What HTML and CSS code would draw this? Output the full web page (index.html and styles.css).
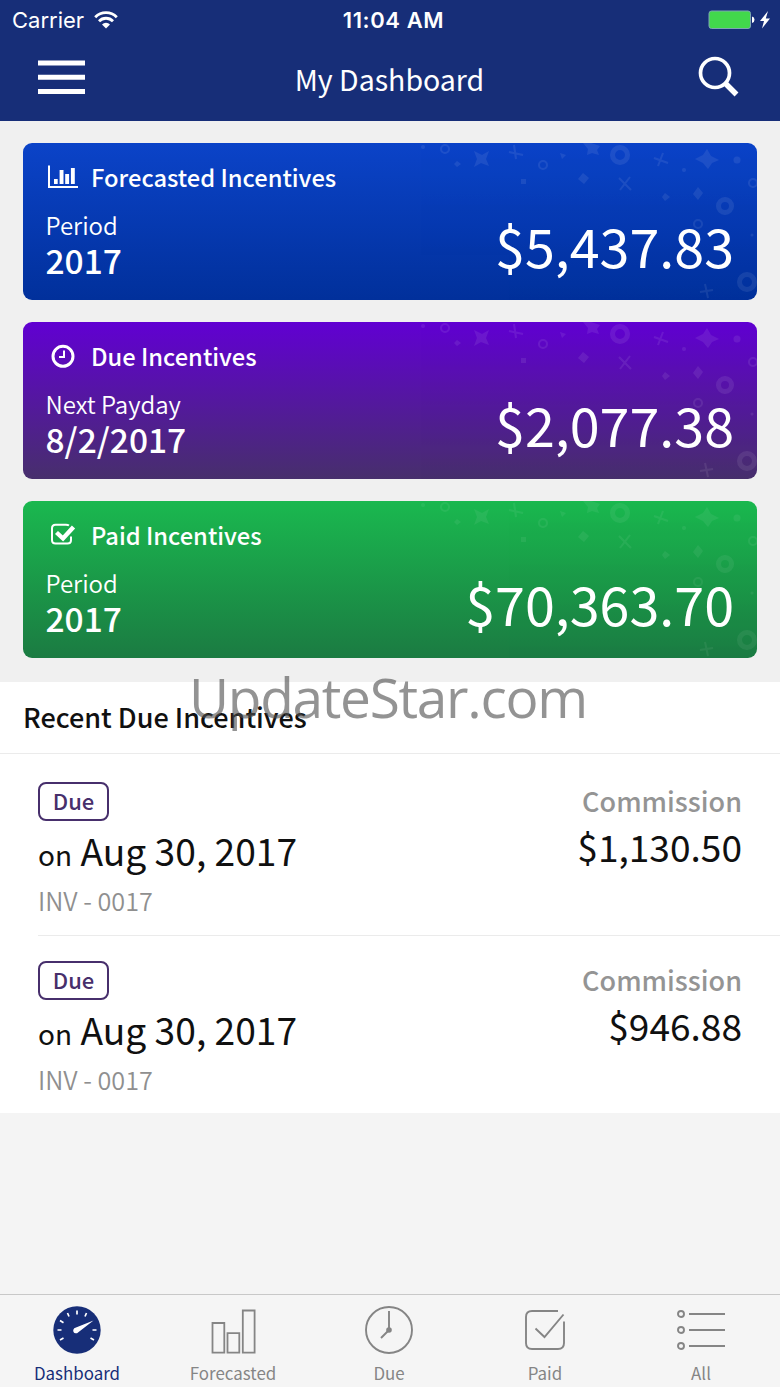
FILE: index.html
```html
<!DOCTYPE html>
<html lang="en">
<head>
<meta charset="utf-8">
<title>My Dashboard</title>
<link rel="stylesheet" href="styles.css">
</head>
<body>
<svg class="defs" width="0" height="0" aria-hidden="true">
  <symbol id="confetti" viewBox="0 0 734 156">
    <g fill="#fff">
      <path d="M451 8l8 4 7-4-3 8 3 7-8-3-7 4 3-8zM560 0h8l9 3-3 4 2 5-7-2-5 2 1-6zM684 6l4 7 8 4-7 3-4 6-5-6-8-4 8-4zM560 30l6 5-5 6-6-5zM675 44l5 6-5 7-5-6z"/>
      <path d="M434 18l4 3-4 3-3-3zM498 36h5v5h-5zM537 10l6 2-4 4zM642 50l5 4-5 4-3-4z"/>
      <circle cx="714" cy="17" r="3.5"/><circle cx="661" cy="27" r="2"/><circle cx="729" cy="92" r="1.5"/><circle cx="400" cy="4" r="2"/>
    </g>
    <g fill="none" stroke="#fff">
      <g stroke-width="2"><circle cx="422" cy="6" r="4"/><circle cx="520" cy="22" r="4"/><circle cx="675" cy="81" r="4"/><circle cx="730" cy="40" r="4"/>
      <path d="M486 9l14 3M491 2l2 14M631 15l14 5M635 23l5-13M596 35l12 12M607 34l-10 13M677 149l13-2M682 141l3 14"/></g>
      <g stroke-width="5"><circle cx="597" cy="12" r="7.500"/><circle cx="702" cy="63" r="6.500"/><circle cx="724" cy="139" r="7.500"/></g>
    </g>
  </symbol>
</svg>
<div class="app">
  <header class="header">
    <div class="status">
      <div class="carrier"><span>Carrier</span>
        <svg width="24" height="18" viewBox="0 0 24 18"><g fill="none" stroke="#fff" stroke-width="2.8"><path d="M1.2 6.2a15.2 15.2 0 0 1 21.6 0"/><path d="M5 10.2a9.800 9.800 0 0 1 14 0"/></g><path d="M12 17.400l-4-4a5.700 5.700 0 0 1 8 0z" fill="#fff"/></svg>
      </div>
      <div class="time">11:04 AM</div>
      <svg class="battery" width="64" height="20" viewBox="0 0 64 20"><rect x="1" y="1" width="41.5" height="17.5" rx="2.5" fill="#42d84c" stroke="#7ea6b3"/><path d="M44 6.500q2.500.5 2.500 3.300t-2.500 3.200z" fill="#fff"/><path d="M60 1l-8 10h4l-2 7.500 8-10h-4.200z" fill="#fff"/></svg>
    </div>
    <div class="navbar">
      <svg class="menu" width="48" height="36" viewBox="0 0 48 36"><path d="M0 3h47M0 17.200h47M0 31.400h47" stroke="#fff" stroke-width="5"/></svg>
      <h1 class="title">My Dashboard</h1>
      <svg class="search" width="44" height="44" viewBox="0 0 44 44"><g fill="none" stroke="#fff"><circle cx="18" cy="18" r="14.500" stroke-width="3.700"/><path d="M28 28l11.500 11.500" stroke-width="5.500"/></g></svg>
    </div>
  </header>

  <main class="cards">
    <section class="card forecast">
      <svg class="pattern"><use href="#confetti"/></svg>
      <div class="card-head">
        <svg width="34" height="30" viewBox="0 0 34 30"><path d="M3 3.500V25h29" fill="none" stroke="#fff" stroke-width="2"/><path d="M8 17h3.700v5H8zM13.600 8h3.900v14h-3.900zM19.200 12h3.900v10h-3.900zM24.900 6h3.900v16h-3.900z" fill="#fff"/></svg>
        <h2>Forecasted Incentives</h2>
      </div>
      <div class="card-body">
        <div><div class="label">Period</div><div class="value">2017</div></div>
        <div class="amount">$5,437.83</div>
      </div>
    </section>
    <section class="card due">
      <svg class="pattern"><use href="#confetti"/></svg>
      <div class="card-head">
        <svg width="34" height="30" viewBox="0 0 34 30"><circle cx="17" cy="15.300" r="10" fill="none" stroke="#fff" stroke-width="3"/><path d="M18 9.500v6.500h-5" fill="none" stroke="#fff" stroke-width="2"/></svg>
        <h2>Due Incentives</h2>
      </div>
      <div class="card-body">
        <div><div class="label">Next Payday</div><div class="value">8/2/2017</div></div>
        <div class="amount">$2,077.38</div>
      </div>
    </section>
    <section class="card paid">
      <svg class="pattern"><use href="#confetti"/></svg>
      <div class="card-head">
        <svg width="34" height="30" viewBox="0 0 34 30"><path d="M23 5.500q-1-.7-3-.7H9.500q-3.500 0-3.500 3.500v11.700q0 3.500 3.500 3.500h12q3.500 0 3.500-3.500V16.500" fill="none" stroke="#fff" stroke-width="2"/><path d="M10.500 12.500l6.500 6L27.500 7" fill="none" stroke="#fff" stroke-width="4.400"/></svg>
        <h2>Paid Incentives</h2>
      </div>
      <div class="card-body">
        <div><div class="label">Period</div><div class="value">2017</div></div>
        <div class="amount">$70,363.70</div>
      </div>
    </section>
  </main>

  <section class="recent">
    <h2 class="recent-title">Recent Due Incentives</h2>
    <article class="item">
      <div><div class="badge">Due</div><div class="date"><span class="on">on</span> Aug 30, 2017</div><div class="inv">INV - 0017</div></div>
      <div class="right"><div class="commission">Commission</div><div class="sum">$1,130.50</div></div>
    </article>
    <article class="item last">
      <div><div class="badge">Due</div><div class="date"><span class="on">on</span> Aug 30, 2017</div><div class="inv">INV - 0017</div></div>
      <div class="right"><div class="commission">Commission</div><div class="sum">$946.88</div></div>
    </article>
  </section>

  <nav class="tabs">
    <div class="tab active">
      <svg width="48" height="48" viewBox="0 0 48 48"><circle cx="24" cy="24" r="23.700" fill="#172e78"/><path d="M24 4.500v4M14.500 7l1.500 3.500M33.500 7L32 10.500M7 14.500l3.500 2.200M4.500 24h4M39.500 24h4M7 34l3.500-2M41 34l-3.500-2" stroke="#fff" stroke-width="1.700"/><path d="M40.500 14.500L25 26.500a2.800 2.800 0 1 1-2.600-4.700z" fill="#fff"/></svg>
      <span>Dashboard</span>
    </div>
    <div class="tab">
      <svg width="48" height="48" viewBox="0 0 48 48"><path d="M3.500 17h11.800v29.700H3.500zM18.500 27.200h11.800v19.500H18.500zM33.800 4.500h11.800v42.200H33.800z" fill="none" stroke="#858585" stroke-width="1.800"/></svg>
      <span>Forecasted</span>
    </div>
    <div class="tab">
      <svg width="48" height="48" viewBox="0 0 48 48"><g fill="none" stroke="#858585" stroke-width="1.900"><circle cx="24" cy="24" r="23"/><path d="M24 5v19l-8 8"/></g><circle cx="24" cy="24" r="2.800" fill="#858585"/></svg>
      <span>Due</span>
    </div>
    <div class="tab">
      <svg width="48" height="48" viewBox="0 0 48 48"><path d="M37 5H11q-6 0-6 6v26q0 6 6 6h26q6 0 6-6V15.500M14.500 22.500l9 8.500L42.500 8.500" fill="none" stroke="#858585" stroke-width="1.900"/></svg>
      <span>Paid</span>
    </div>
    <div class="tab">
      <svg width="48" height="48" viewBox="0 0 48 48"><g fill="none" stroke="#858585" stroke-width="1.900"><circle cx="4" cy="8" r="3"/><circle cx="4" cy="24" r="3"/><circle cx="4" cy="40" r="3"/><path d="M12 8h36M12 24h36M12 40h36"/></g></svg>
      <span>All</span>
    </div>
  </nav>
  <div class="watermark">UpdateStar.com</div>
</div>
</body>
</html>
```
FILE: styles.css
```css
* { box-sizing: border-box; margin: 0; padding: 0; }
body { background: #f4f4f4; font-family: "Noto Sans CJK SC", "Open Sans", sans-serif; color: #101010; }
svg { display: block; flex: none; }
h1, h2 { font-weight: 400; }
.defs { position: absolute; }
.app { position: relative; width: 780px; height: 1387px; display: flex; flex-direction: column; overflow: hidden; white-space: nowrap; }

.header { height: 121px; background: #172e78; color: #fff; }
.status { height: 40px; display: grid; grid-template-columns: 1fr auto 1fr; align-items: center; padding: 0 8px 0 12px; font-family: Inter, sans-serif; font-size: 22px; }
.carrier { display: flex; align-items: center; gap: 10px; }
.time { font-weight: 600; letter-spacing: .6px; margin-left: 3px; }
.battery { justify-self: end; }
.navbar { height: 81px; display: grid; grid-template-columns: 1fr auto 1fr; padding: 14px 39px 0 38px; }
.menu { margin-top: 6px; }
.title { font-size: 28.5px; line-height: 50px; }
.search { justify-self: end; margin-top: 1px; }

.cards { height: 561px; padding: 22px 23px 0; display: flex; flex-direction: column; gap: 22.5px; background: #f0f0f0; }
.card { position: relative; height: 156.5px; flex: none; border-radius: 9px; padding: 19px 23px 0; color: #fff; overflow: hidden; }
.pattern { position: absolute; left: 0; top: 0; width: 734px; height: 156px; opacity: .08; }
.forecast { background: linear-gradient(#0b43c8, #01309b); }
.due { background: linear-gradient(#6100d2, #472f6c); }
.paid { background: linear-gradient(#1ab84f, #1b7b42); }
.paid .pattern { opacity: .06; }
.card-head { display: flex; gap: 11px; height: 30px; }
.card-head h2 { font-size: 23.7px; line-height: 30px; font-weight: 500; }
.card-body { display: flex; justify-content: space-between; margin: 16px 0 0 -.5px; }
.label { font-size: 24px; line-height: 34px; font-weight: 350; }
.value { font-size: 33.5px; line-height: 36px; font-weight: 500; }
.amount { font-size: 53.8px; line-height: 74px; }

.recent { background: #fff; height: 431px; }
.recent-title { height: 72px; padding-left: 23px; border-bottom: 1px solid #ebebeb; font-size: 27px; line-height: 69px; font-weight: 500; }
.item { height: 182px; margin-left: 38px; padding: 28px 38px 0 0; display: flex; justify-content: space-between; border-bottom: 1px solid #ebebeb; }
.last { height: 177px; padding-top: 25px; border: 0; }
.badge { width: 71px; height: 39px; border: 2px solid #472f6c; border-radius: 8px; color: #472f6c; font-size: 22px; line-height: 33px; text-align: center; font-weight: 500; }
.date { font-size: 37.2px; line-height: 58px; }
.on { font-size: 28px; }
.inv { margin-top: -2px; font-size: 25.2px; line-height: 38px; color: #8f8f8f; font-weight: 350; }
.right { text-align: right; }
.commission { font-size: 27px; line-height: 38px; color: #949494; font-weight: 500; }
.sum { font-size: 37.1px; line-height: 52px; }

.tabs { margin: auto 0 0 -1px; width: 781px; height: 93px; border-top: 1px solid #c8c8c8; background: #f5f5f5; display: grid; grid-template-columns: repeat(5, 156px); }
.tab { display: flex; flex-direction: column; align-items: center; padding-top: 11px; color: #858585; font-size: 16.9px; line-height: 37px; }
.active { color: #172e78; }
.watermark { position: absolute; left: 189px; top: 659px; font-family: "Open Sans", sans-serif; font-weight: 400; font-size: 55px; letter-spacing: -1.3px; line-height: 75px; color: rgba(80, 80, 80, .62); }
```
